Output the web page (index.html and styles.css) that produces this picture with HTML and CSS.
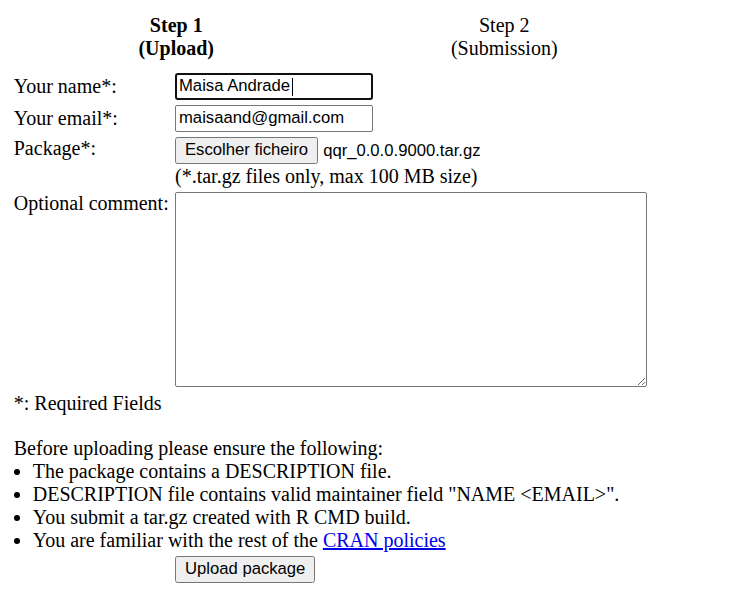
FILE: index.html
```html
<!DOCTYPE html>
<html>
<head>
<meta charset="utf-8">
<title>CRAN Package Submission</title>
<link rel="stylesheet" href="styles.css">
</head>
<body>
<div class="steps">
  <div class="step current">Step 1<br>(Upload)</div>
  <div class="step">Step 2<br>(Submission)</div>
</div>
<form class="form">
  <div class="row center">
    <label class="label">Your name*:</label>
    <div class="field caret-wrap">
      <input class="text focused" type="text" value="Maisa Andrade">
      <span class="caret"></span>
    </div>
  </div>
  <div class="row center">
    <label class="label">Your email*:</label>
    <div class="field"><input class="text" type="text" value="maisaand@gmail.com"></div>
  </div>
  <div class="row package">
    <label class="label">Package*:</label>
    <div class="field">
      <div class="file"><button type="button" class="btn">Escolher ficheiro</button><span class="filename">qqr_0.0.0.9000.tar.gz</span></div>
      <div class="hint">(*.tar.gz files only, max 100 MB size)</div>
    </div>
  </div>
  <div class="row">
    <label class="label">Optional comment:</label>
    <div class="field"><textarea class="comment"></textarea></div>
  </div>
  <div class="note">*: Required Fields</div>
  <div class="before">Before uploading please ensure the following:</div>
  <ul class="checks">
    <li>The package contains a DESCRIPTION file.</li>
    <li>DESCRIPTION file contains valid maintainer field "NAME &lt;EMAIL&gt;".</li>
    <li>You submit a tar.gz created with R CMD build.</li>
    <li>You are familiar with the rest of the <a href="#">CRAN policies</a></li>
  </ul>
  <div class="row">
    <div class="label"></div>
    <div class="field"><button type="button" class="btn">Upload package</button></div>
  </div>
</form>
</body>
</html>
```
FILE: styles.css
```css
html, body {
  margin: 0;
  padding: 0;
  background: #fff;
}
body {
  margin: 10px;
  font-family: "Liberation Serif", "Times New Roman", serif;
  font-size: 20px;
  line-height: 23px;
  color: #000;
}
.steps {
  display: grid;
  grid-template-columns: 325px 325px;
  column-gap: 3px;
  padding: 3.75px 0 0 3.75px;
}
.step {
  text-align: center;
}
.step.current {
  font-weight: bold;
}
.form {
  display: flex;
  flex-direction: column;
  padding: 0 0 0 3.75px;
  margin-top: 13px;
}
.row {
  display: grid;
  grid-template-columns: 161.25px 1fr;
  align-items: start;
  margin-bottom: 5px;
}
.row.center {
  align-items: center;
}
.row.package {
  margin-bottom: 4px;
}
.label {
  display: block;
}
.field {
  display: flex;
  flex-direction: column;
  align-items: flex-start;
}
.caret-wrap {
  position: relative;
}
.text {
  box-sizing: border-box;
  width: 198px;
  height: 27px;
  margin: 0;
  padding: 1px 3px;
  border: 1px solid #767676;
  border-radius: 2px;
  font-family: "Liberation Sans", Arial, sans-serif;
  font-size: 16.67px;
  color: #000;
  background: #fff;
}
.text.focused {
  border: 2px solid #101010;
  border-radius: 3px;
  padding: 0 2px;
}
.caret {
  position: absolute;
  left: 117px;
  top: 5px;
  width: 1px;
  height: 18px;
  background: #000;
}
.file {
  display: flex;
  align-items: center;
  gap: 5px;
}
.btn {
  box-sizing: border-box;
  height: 27px;
  margin: 0;
  padding: 0 9px;
  border: 1px solid #767676;
  border-radius: 2.5px;
  background: #efefef;
  font-family: "Liberation Sans", Arial, sans-serif;
  font-size: 16.67px;
  color: #000;
}
.filename {
  font-family: "Liberation Sans", Arial, sans-serif;
  font-size: 16.67px;
}
.hint {
  margin-top: 1px;
}
.comment {
  box-sizing: border-box;
  width: 472px;
  height: 195px;
  margin: 0;
  border: 1px solid #767676;
  border-radius: 2px;
  font-family: "Liberation Mono", monospace;
  font-size: 16.67px;
}
.before {
  margin-top: 22px;
}
.checks {
  margin: 0;
  padding-left: 19px;
}
.checks a {
  color: #0000ee;
  text-decoration: underline;
}
.checks + .row {
  margin-top: 4px;
}
```
